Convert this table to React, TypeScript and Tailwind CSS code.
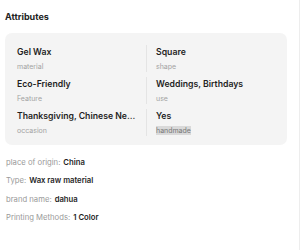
const attrs = [
  { value: 'Gel Wax', label: 'material' },
  { value: 'Square', label: 'shape' },
  { value: 'Eco-Friendly', label: 'Feature' },
  { value: 'Weddings, Birthdays', label: 'use' },
  { value: 'Thanksgiving, Chinese Ne...', label: 'occasion' },
  { value: 'Yes', label: 'handmade', highlight: true },
]

const specs = [
  { label: 'place of origin:', value: 'China' },
  { label: 'Type:', value: 'Wax raw material' },
  { label: 'brand name:', value: 'dahua' },
  { label: 'Printing Methods:', value: '1 Color' },
]

export default function App() {
  return (
    <div
      className="w-[300px] h-[250px] bg-white border-r border-[#ededed] overflow-hidden"
      style={{ fontFamily: 'Inter, "Noto Sans", sans-serif' }}
    >
      <div className="pl-[5px] pr-3">
        <h2 className="pt-[11px] text-[9px] leading-[12px] font-bold text-[#222]">Attributes</h2>

        <div className="mt-[10px] rounded-[7px] bg-[#f4f4f4] pt-[12px] pb-[9px] px-3">
          <div className="grid grid-cols-2 gap-y-[5px]">
            {attrs.map((a, i) => (
              <div
                key={a.label}
                className={`min-w-0 ${i % 2 === 1 ? 'border-l border-[#e4e4e4] pl-[9px]' : 'pr-[8px]'}`}
              >
                <div className="text-[8.7px] leading-[14px] font-semibold text-[#1f1f1f] whitespace-nowrap">{a.value}</div>
                <div className="mt-[3px] text-[7px] leading-[10px]">
                  <span className={a.highlight ? 'bg-[#d9d9d9] text-[#777]' : 'text-[#a3a3a3]'}>{a.label}</span>
                </div>
              </div>
            ))}
          </div>
        </div>

        <div className="mt-[9px] pl-[1px]">
          {specs.map(s => (
            <div key={s.label} className="text-[7.7px] leading-[18.3px] flex gap-[3px]">
              <span className="text-[#9a9a9a]">{s.label}</span>
              <span className="font-semibold text-[#1f1f1f]">{s.value}</span>
            </div>
          ))}
        </div>
      </div>
    </div>
  )
}
